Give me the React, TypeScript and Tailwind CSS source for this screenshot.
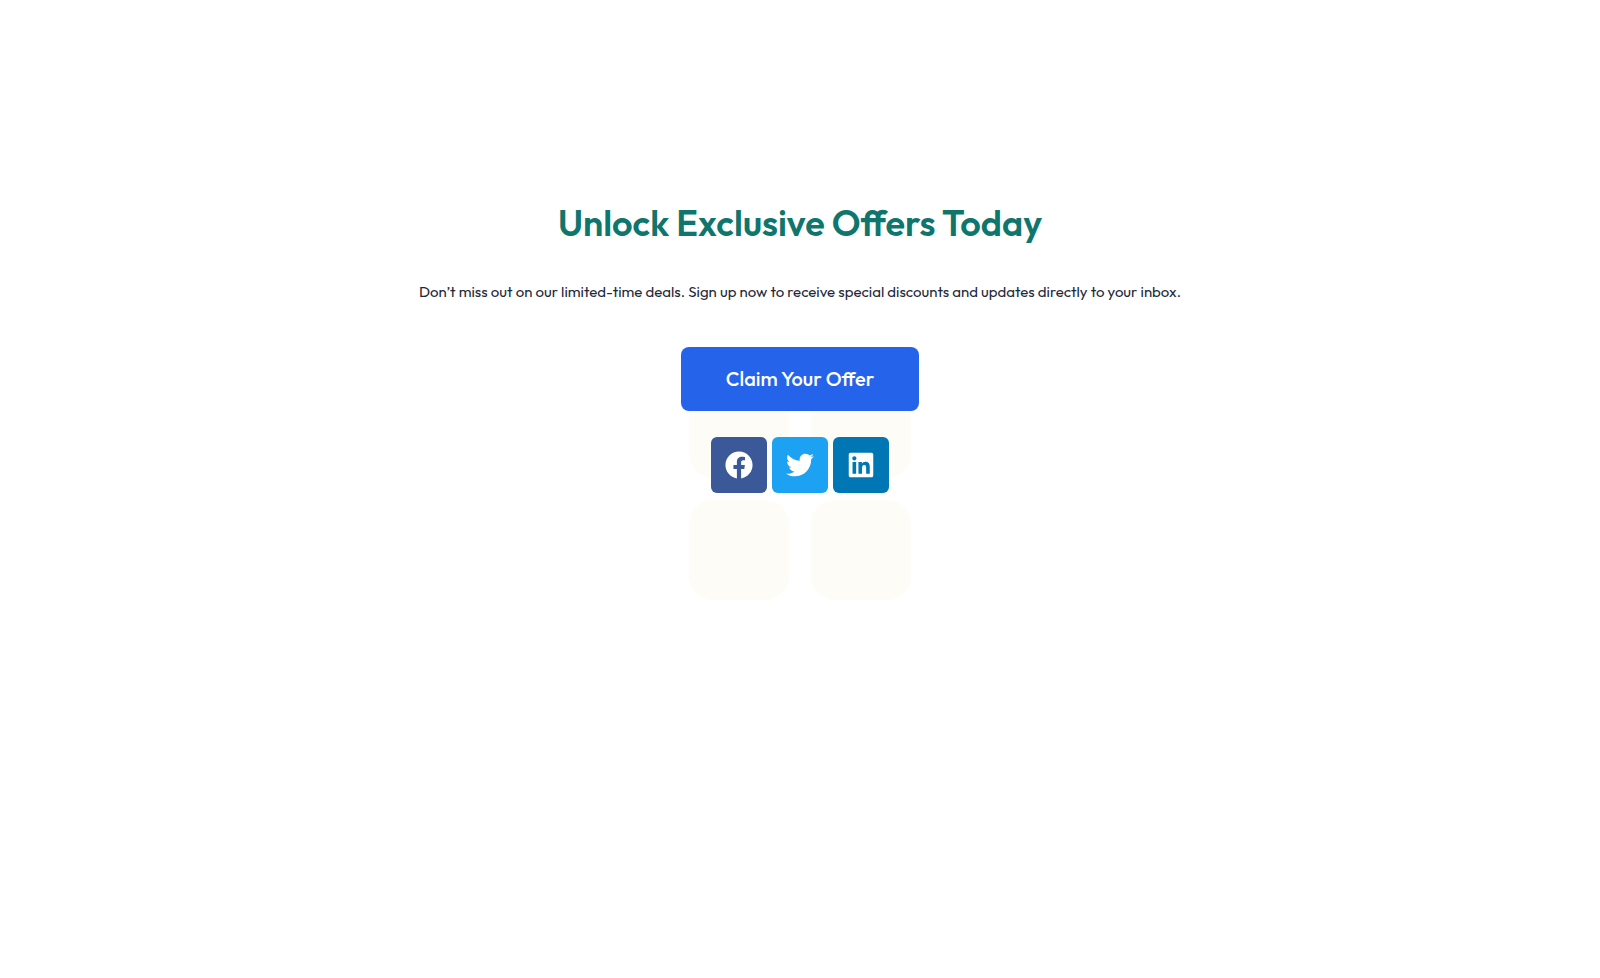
import { FaFacebook, FaLinkedin, FaTwitter } from "react-icons/fa";

const socials = [
  { name: "Facebook", Icon: FaFacebook, color: "bg-[#3b5998]" },
  { name: "Twitter", Icon: FaTwitter, color: "bg-[#1da1f2]" },
  { name: "LinkedIn", Icon: FaLinkedin, color: "bg-[#0077b5]" },
];

function Backdrop() {
  return (
    <div
      aria-hidden="true"
      className="absolute inset-0 -z-10 grid grid-cols-[100px_100px] place-content-center gap-[22px]"
    >
      <div className="size-[100px] rounded-3xl bg-[#fefcf7]" />
      <div className="size-[100px] rounded-3xl bg-[#fefcf7]" />
      <div className="size-[100px] rounded-3xl bg-[#fefcf7]" />
      <div className="size-[100px] rounded-3xl bg-[#fefcf7]" />
    </div>
  );
}

export default function App() {
  return (
    <main className="relative isolate flex min-h-screen flex-col items-center bg-white px-6 pt-[199px] text-center font-[Outfit,Lato,sans-serif]">
      <Backdrop />
      <h1 className="text-4xl leading-12 font-semibold text-[#0f766e]">Unlock Exclusive Offers Today</h1>
      <p className="mt-[33px] text-[15px] leading-6 text-[#1e293b]">
        Don’t miss out on our limited-time deals. Sign up now to receive special discounts and updates directly to your
        inbox.
      </p>
      <button
        type="button"
        className="mt-[43px] rounded-lg bg-[#2563eb] px-[45px] py-[18px] text-xl leading-7 font-medium text-white"
      >
        Claim Your Offer
      </button>
      <nav aria-label="Social media" className="mt-[26px] flex gap-[5px]">
        {socials.map(({ name, Icon, color }) => (
          <a
            key={name}
            href="#"
            aria-label={name}
            className={`flex size-14 items-center justify-center rounded-md text-white ${color}`}
          >
            <Icon className="size-7" />
          </a>
        ))}
      </nav>
    </main>
  );
}
